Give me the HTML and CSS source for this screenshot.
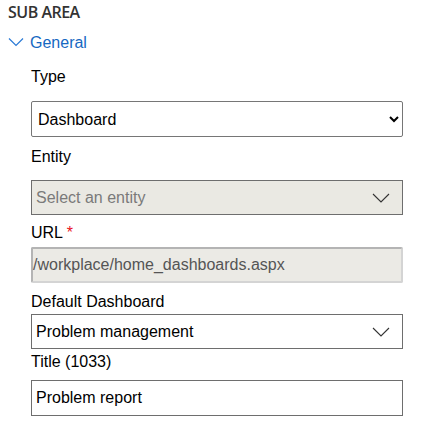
FILE: index.html
```html
<!DOCTYPE html>
<html>
<head>
<meta charset="utf-8">
<link rel="stylesheet" href="styles.css">
</head>
<body>
<div class="panel">
  <div class="heading">SUB AREA</div>
  <div class="group-toggle">
    <svg class="toggle-icon" width="16" height="10" viewBox="0 0 16 10"><path d="M1 1.5 L8 8.5 L15 1.5" fill="none" stroke="#2a7ad6" stroke-width="1.2"/></svg>
    <span class="group-name">General</span>
  </div>
  <div class="fields">
    <label class="label label-type">Type</label>
    <select class="native-select">
      <option>Dashboard</option>
    </select>

    <label class="label label-entity">Entity</label>
    <div class="box box-disabled box-entity">
      <span class="placeholder">Select an entity</span>
      <svg class="chev" width="18" height="10" viewBox="0 0 18 10"><path d="M1 1 L9 9 L17 1" fill="none" stroke="#333" stroke-width="1.1"/></svg>
    </div>

    <label class="label label-url">URL <span class="req">*</span></label>
    <div class="box box-readonly">
      <span class="readonly-text">/workplace/home_dashboards.aspx</span>
    </div>

    <label class="label label-dd">Default Dashboard</label>
    <div class="box box-select">
      <span class="value">Problem management</span>
      <svg class="chev" width="18" height="10" viewBox="0 0 18 10"><path d="M1 1 L9 9 L17 1" fill="none" stroke="#333" stroke-width="1.1"/></svg>
    </div>

    <label class="label label-title">Title (1033)</label>
    <div class="box box-input">
      <span class="value">Problem report</span>
    </div>
  </div>
</div>
</body>
</html>
```

FILE: styles.css
```css
html, body {
  margin: 0;
  padding: 0;
  background: #ffffff;
}

body {
  font-family: "Liberation Sans", Arial, sans-serif;
  color: #000;
}

.panel {
  padding: 3px 0 0 8px;
}

.heading {
  font-family: "Open Sans", "Liberation Sans", sans-serif;
  font-weight: 600;
  font-size: 16px;
  line-height: 18px;
  color: #333;
  letter-spacing: -0.5px;
}

.group-toggle {
  display: flex;
  align-items: center;
  height: 20px;
  margin-top: 12px;
}

.toggle-icon {
  display: block;
  margin-right: 6px;
  margin-top: -2px;
}

.group-name {
  font-size: 16px;
  line-height: 20px;
  color: #1668c2;
}

.fields {
  display: flex;
  flex-direction: column;
  padding-left: 23px;
  width: 372px;
}

.label {
  display: block;
  font-size: 16px;
  line-height: 20px;
  color: #000;
}

.label-type { margin-top: 14px; margin-bottom: 14px; }
.label-entity { margin-top: 10px; margin-bottom: 13px; }
.label-url { margin-top: 8px; margin-bottom: 4px; }
.label-dd { margin-top: 9px; margin-bottom: 2px; }
.label-title { margin-top: 3px; margin-bottom: 8px; }

.req {
  color: #e81123;
}

.native-select {
  display: block;
  box-sizing: border-box;
  width: 372px;
  height: 36px;
  margin: 0;
  font-family: "Liberation Sans", Arial, sans-serif;
  font-size: 16px;
  color: #000;
  background: #fff;
  border: 1px solid #767676;
  border-radius: 2px;
  padding: 0 2px;
}

.box {
  box-sizing: border-box;
  width: 372px;
  height: 36px;
  display: flex;
  align-items: center;
  justify-content: space-between;
  font-size: 16px;
  border: 1px solid #6e6e6e;
  padding: 0 12px 0 4px;
  background: #fff;
}

.box-entity {
  height: 35px;
}

.box-disabled {
  background: #eae9e3;
}

.placeholder {
  color: #7a7a7a;
}

.box-readonly {
  background: #ebeae5;
  border: 2px solid #b4b4b4;
  border-right-color: #d4d4d4;
  border-bottom-color: #d4d4d4;
  border-radius: 2px;
  padding-left: 0;
}

.readonly-text {
  color: #555;
}

.box-select {
  height: 35px;
}

.value {
  color: #000;
}

.chev {
  display: block;
}
```
